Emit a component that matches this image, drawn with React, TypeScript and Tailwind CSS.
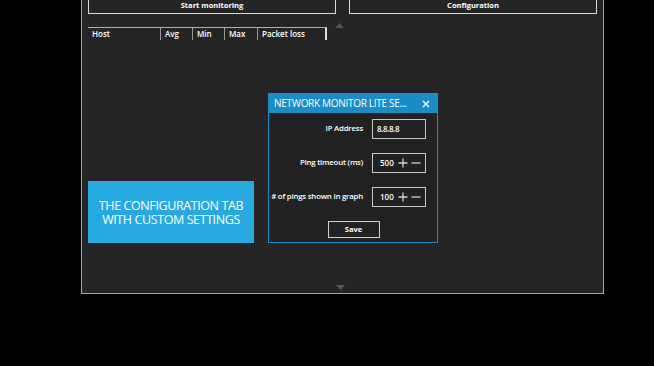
import React from 'react';

const font = { fontFamily: '"Open Sans", "Noto Sans", sans-serif' };

function Stepper({ value }: { value: string }) {
  return (
    <div className="flex items-center h-[20px] w-[54px] border border-[#c8c8c8] pl-[7px] gap-[3px]">
      <span className="text-[8px] font-semibold text-white w-[15px]">{value}</span>
      <svg width="10" height="10" viewBox="0 0 10 10" className="text-[#d0d0d0]">
        <path d="M5 0.5v9M0.5 5h9" stroke="currentColor" strokeWidth="1.3" />
      </svg>
      <svg width="10" height="10" viewBox="0 0 10 10" className="text-[#d0d0d0]">
        <path d="M0.5 5h9" stroke="currentColor" strokeWidth="1.3" />
      </svg>
    </div>
  );
}

function Row({ label, children }: { label: string; children: React.ReactNode }) {
  return (
    <div className="flex items-center gap-[9px]">
      <span className="w-[94px] text-right text-[7.8px] font-semibold text-white whitespace-nowrap tracking-[-0.2px]">
        {label}
      </span>
      {children}
    </div>
  );
}

export default function App() {
  const columns = [
    { name: 'Host', w: 'w-[73px]' },
    { name: 'Avg', w: 'w-[32px]' },
    { name: 'Min', w: 'w-[32px]' },
    { name: 'Max', w: 'w-[33px]' },
    { name: 'Packet loss', w: 'w-[69px]' },
  ];

  return (
    <div className="relative w-[654px] h-[366px] bg-black overflow-hidden" style={font}>
      {/* main window */}
      <div className="ml-[81px] w-[523px] h-[294px] border-x border-b border-[#a6a6a6] bg-[#252525] px-[6px] flex flex-col">
        <div className="flex gap-[13px]">
          <button className="w-[248px] h-[14px] border-x border-b border-[#d8d8d8] text-[7.5px] font-bold text-white leading-none pb-[1px]">
            Start monitoring
          </button>
          <button className="w-[248px] h-[14px] border-x border-b border-[#d8d8d8] text-[7.5px] font-bold text-white leading-none pb-[1px]">
            Configuration
          </button>
        </div>

        <div className="flex mt-[13px]">
          <div className="flex border-t border-[#b0b0b0] h-[13px]">
            {columns.map((c, i) => (
              <div
                key={c.name}
                className={`${c.w} h-full flex items-center pl-[4px] text-[8px] font-semibold text-white ${
                  i < columns.length - 1 ? 'border-r border-[#9a9a9a]' : 'border-r-2 border-[#e0e0e0]'
                }`}
              >
                {c.name}
              </div>
            ))}
          </div>
          <div className="ml-[8px] -mt-[4px]">
            <svg width="9" height="5" viewBox="0 0 9 5">
              <path d="M0 5L4.5 0L9 5Z" fill="#555" />
            </svg>
          </div>
        </div>

        <div className="flex-1" />
        <div className="flex pl-[248px] pb-[3px]">
          <svg width="9" height="5" viewBox="0 0 9 5">
            <path d="M0 0L4.5 5L9 0Z" fill="#555" />
          </svg>
        </div>
      </div>

      {/* annotation */}
      <div className="absolute left-[88px] top-[181px] w-[166px] h-[62px] bg-[#29a9e1] flex items-center justify-center pt-[1px]">
        <p className="w-[154px] text-center text-white text-[12.5px] leading-[14px] tracking-[-0.4px]">
          THE CONFIGURATION TAB WITH CUSTOM SETTINGS
        </p>
      </div>

      {/* settings dialog */}
      <div className="absolute left-[268px] top-[93px] w-[170px] h-[150px] border border-[#1a8cc8] bg-[#222222] flex flex-col">
        <div className="h-[19px] bg-[#1a8cc8] flex items-center justify-between pl-[5px] pr-[7px]">
          <span className="text-[10px] text-white tracking-[-0.3px] whitespace-nowrap">NETWORK MONITOR LITE SE...</span>
          <svg width="8" height="8" viewBox="0 0 8 8">
            <path d="M1 1L7 7M7 1L1 7" stroke="#fff" strokeWidth="1.3" />
          </svg>
        </div>
        <div className="flex flex-col items-start pt-[6px] gap-[14px]">
          <Row label="IP Address">
            <div className="h-[20px] w-[54px] border border-[#c8c8c8] flex items-center pl-[4px] text-[8px] font-semibold text-white tracking-[-0.4px]">
              8.8.8.8
            </div>
          </Row>
          <Row label="Ping timeout (ms)">
            <Stepper value="500" />
          </Row>
          <Row label="# of pings shown in graph">
            <Stepper value="100" />
          </Row>
        </div>
        <div className="flex justify-center mt-[14px] pl-[1px]">
          <button className="w-[52px] h-[17px] border border-[#d0d0d0] text-[7.5px] font-bold text-white leading-none">
            Save
          </button>
        </div>
      </div>
    </div>
  );
}
